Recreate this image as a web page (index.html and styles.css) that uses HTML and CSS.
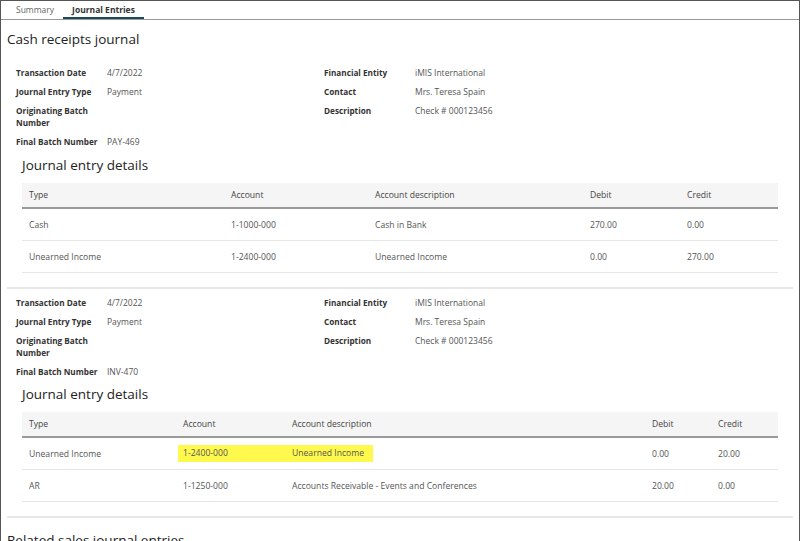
FILE: index.html
```html
<!DOCTYPE html>
<html lang="en">
<head>
    <meta charset="UTF-8">
    <title>Journal Entries</title>
    <link rel="stylesheet" href="styles.css">
</head>
<body>
    <div class="frame">
        <div class="tabs">
            <div class="tab">Summary</div>
            <div class="tab active">Journal Entries</div>
        </div>

        <h1>Cash receipts journal</h1>

        <div class="entry">
            <div class="fields">
                <div class="col">
                    <div class="field"><span class="label">Transaction Date</span><span class="value">4/7/2022</span></div>
                    <div class="field"><span class="label">Journal Entry Type</span><span class="value">Payment</span></div>
                    <div class="field"><span class="label">Originating Batch Number</span><span class="value"></span></div>
                    <div class="field"><span class="label">Final Batch Number</span><span class="value">PAY-469</span></div>
                </div>
                <div class="col">
                    <div class="field"><span class="label">Financial Entity</span><span class="value">iMIS International</span></div>
                    <div class="field"><span class="label">Contact</span><span class="value">Mrs. Teresa Spain</span></div>
                    <div class="field"><span class="label">Description</span><span class="value">Check # 000123456</span></div>
                </div>
            </div>
            <h2>Journal entry details</h2>
            <table class="first">
                <thead>
                    <tr><th>Type</th><th>Account</th><th>Account description</th><th>Debit</th><th>Credit</th></tr>
                </thead>
                <tbody>
                    <tr><td>Cash</td><td>1-1000-000</td><td>Cash in Bank</td><td>270.00</td><td>0.00</td></tr>
                    <tr><td>Unearned Income</td><td>1-2400-000</td><td>Unearned Income</td><td>0.00</td><td>270.00</td></tr>
                </tbody>
            </table>
        </div>

        <div class="entry">
            <div class="fields">
                <div class="col">
                    <div class="field"><span class="label">Transaction Date</span><span class="value">4/7/2022</span></div>
                    <div class="field"><span class="label">Journal Entry Type</span><span class="value">Payment</span></div>
                    <div class="field"><span class="label">Originating Batch Number</span><span class="value"></span></div>
                    <div class="field"><span class="label">Final Batch Number</span><span class="value">INV-470</span></div>
                </div>
                <div class="col">
                    <div class="field"><span class="label">Financial Entity</span><span class="value">iMIS International</span></div>
                    <div class="field"><span class="label">Contact</span><span class="value">Mrs. Teresa Spain</span></div>
                    <div class="field"><span class="label">Description</span><span class="value">Check # 000123456</span></div>
                </div>
            </div>
            <h2>Journal entry details</h2>
            <table class="second">
                <thead>
                    <tr><th>Type</th><th>Account</th><th>Account description</th><th>Debit</th><th>Credit</th></tr>
                </thead>
                <tbody>
                    <tr class="marked"><td>Unearned Income</td><td class="hl-start"><span>1-2400-000</span></td><td class="hl-end"><span>Unearned Income</span></td><td>0.00</td><td>20.00</td></tr>
                    <tr><td>AR</td><td>1-1250-000</td><td>Accounts Receivable - Events and Conferences</td><td>20.00</td><td>0.00</td></tr>
                </tbody>
            </table>
        </div>

        <h1 class="related">Related sales journal entries</h1>
    </div>
</body>
</html>
```

FILE: styles.css
```css
html, body {
    margin: 0;
    padding: 0;
    height: 100%;
    overflow: hidden;
}
body {
    font-family: "Open Sans", "Liberation Sans", sans-serif;
    color: #555;
    background: white;
}
.frame {
    box-sizing: border-box;
    height: 541px;
    border: 1px solid #555;
    border-bottom: none;
    overflow: hidden;
}
.tabs {
    display: flex;
    border-bottom: 1px solid #999;
    padding-left: 6px;
    height: 18px;
}
.tab {
    font-size: 8.5px;
    color: #666;
    padding: 3px 9px 0;
}
.tab.active {
    font-weight: bold;
    color: #333;
    border-bottom: 2px solid #1d4a5a;
}
h1 {
    font-weight: normal;
    font-size: 13.5px;
    color: #222;
    margin: 10px 0 0 6px;
}
h1.related {
    margin-top: 13px;
}
.entry {
    margin: 0 6px;
    border-bottom: 2px solid #e8e8e8;
    padding-bottom: 14px;
}
.fields {
    display: grid;
    grid-template-columns: 308px 1fr;
    padding: 19px 0 0 9px;
}
.entry + .entry .fields {
    padding-top: 8px;
}
.entry + .entry h2 {
    margin-top: 0;
}
.field {
    display: flex;
    font-size: 8.5px;
    line-height: 12px;
    margin-bottom: 7px;
}
.label {
    width: 91px;
    font-size: 8.2px;
    font-weight: bold;
    color: #333;
    flex-shrink: 0;
}
h2 {
    font-weight: normal;
    font-size: 13.5px;
    color: #222;
    margin: 1px 0 9px 15px;
}
table {
    width: calc(100% - 30px);
    margin-left: 15px;
    border-collapse: collapse;
    font-size: 8.6px;
}
th {
    background: #f5f5f5;
    font-weight: normal;
    color: #444;
    text-align: left;
    height: 24px;
    padding: 0 7px;
    border-bottom: 2px solid #999;
}
td {
    height: 31px;
    padding: 0 7px;
    border-bottom: 1px solid #e6e6e6;
}
.first th:nth-child(1) { width: 188px; }
.first th:nth-child(2) { width: 130px; }
.first th:nth-child(3) { width: 201px; }
.first th:nth-child(4) { width: 83px; }
.second th:nth-child(1) { width: 140px; }
.second th:nth-child(2) { width: 95px; }
.second th:nth-child(3) { width: 346px; }
.second th:nth-child(4) { width: 52px; }
.marked td.hl-start,
.marked td.hl-end {
    padding: 0;
}
.marked td span {
    display: block;
    background: #fff94d;
    line-height: 17px;
    padding-left: 7px;
}
.marked td.hl-start span {
    margin-left: 2px;
    padding-left: 5px;
}
.marked td.hl-end span {
    box-sizing: border-box;
    width: 88px;
}
```
